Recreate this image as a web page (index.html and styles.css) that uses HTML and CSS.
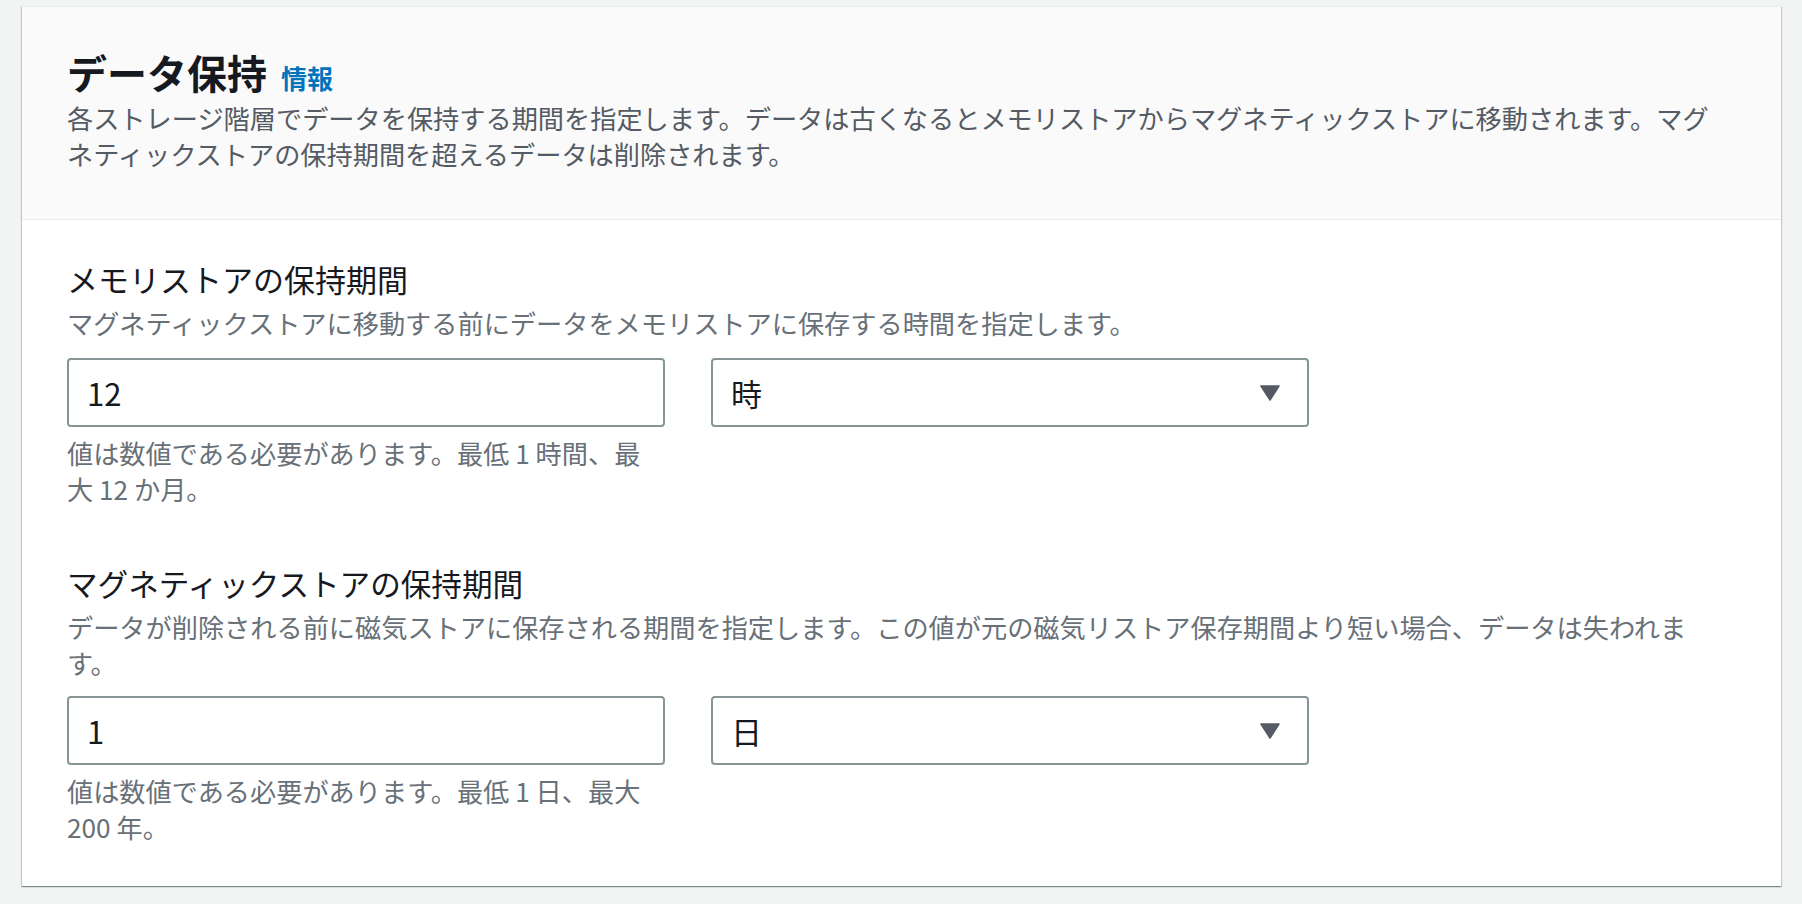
FILE: index.html
```html
<!DOCTYPE html>
<html lang="ja">
<head>
<meta charset="utf-8">
<link rel="stylesheet" href="styles.css">
</head>
<body>
<div class="page">
  <section class="card">
    <header class="card-header">
      <div class="title-row">
        <h2 class="title">データ保持</h2>
        <a class="info">情報</a>
      </div>
      <p class="header-desc">各ストレージ階層でデータを保持する期間を指定します。データは古くなるとメモリストアからマグネティックストアに移動されます。マグネティックストアの保持期間を超えるデータは削除されます。</p>
    </header>
    <div class="card-body">
      <div class="field">
        <div class="label">メモリストアの保持期間</div>
        <div class="desc">マグネティックストアに移動する前にデータをメモリストアに保存する時間を指定します。</div>
        <div class="controls">
          <div class="col">
            <div class="input">12</div>
            <div class="constraint">値は数値である必要があります。最低 1 時間、最大 12 か月。</div>
          </div>
          <div class="col">
            <div class="select"><span>時</span><svg class="caret" viewBox="0 0 20 16" width="20" height="16"><path d="M1 1 H19 L10 15 Z" fill="#545b64" stroke="#545b64" stroke-width="1.5" stroke-linejoin="round"/></svg></div>
          </div>
        </div>
      </div>
      <div class="field field-second">
        <div class="label label-second">マグネティックストアの保持期間</div>
        <div class="desc">データが削除される前に磁気ストアに保存される期間を指定します。この値が元の磁気リストア保存期間より短い場合、データは失われます。</div>
        <div class="controls controls-second">
          <div class="col">
            <div class="input">1</div>
            <div class="constraint">値は数値である必要があります。最低 1 日、最大 200 年。</div>
          </div>
          <div class="col">
            <div class="select"><span>日</span><svg class="caret" viewBox="0 0 20 16" width="20" height="16"><path d="M1 1 H19 L10 15 Z" fill="#545b64" stroke="#545b64" stroke-width="1.5" stroke-linejoin="round"/></svg></div>
          </div>
        </div>
      </div>
    </div>
  </section>
</div>
</body>
</html>
```
FILE: styles.css
```css
html, body {
  margin: 0;
  padding: 0;
  background: #f2f3f3;
}
body {
  font-family: "Noto Sans CJK JP", "Noto Sans", sans-serif;
  color: #16191f;
  text-spacing-trim: space-all;
}
.page {
  padding: 6px 21px 16px 22px;
}
.card {
  background: #ffffff;
  border-top: 1px solid #eaeded;
  box-shadow: 0 1px 1px 0 rgba(0, 28, 36, 0.3), 1px 1px 1px 0 rgba(0, 28, 36, 0.15), -1px 1px 1px 0 rgba(0, 28, 36, 0.15);
}
.card-header {
  background: #fafafa;
  border-bottom: 1px solid #eaeded;
  padding: 41px 54px 47px 45px;
}
.title-row {
  display: flex;
  align-items: baseline;
  gap: 14px;
}
.title {
  margin: 0;
  font-size: 40px;
  line-height: 48px;
  font-weight: 700;
  color: #16191f;
}
.info {
  font-size: 26px;
  font-weight: 700;
  color: #0073bb;
  text-decoration: none;
}
.header-desc {
  margin: 4px 0 0 0;
  font-size: 26.2px;
  line-height: 36px;
  color: #545b64;
}
.card-body {
  padding: 37px 54px 41px 45px;
}
.label {
  font-size: 31px;
  line-height: 44px;
  color: #16191f;
}
.label-second {
  font-size: 30.6px;
}
.desc {
  margin-top: 4px;
  font-size: 26.2px;
  line-height: 36px;
  color: #687078;
}
.controls {
  margin-top: 17px;
  display: grid;
  grid-template-columns: 598px 598px;
  column-gap: 46px;
  align-items: start;
}
.controls-second {
  margin-top: 15px;
}
.input, .select {
  box-sizing: border-box;
  height: 69px;
  border: 2px solid #879596;
  border-radius: 4px;
  background: #ffffff;
  font-size: 31px;
  color: #16191f;
  display: flex;
  align-items: center;
}
.input {
  padding-left: 18px;
}
.select {
  padding-left: 18px;
  padding-right: 27px;
  justify-content: space-between;
}
.caret {
  display: block;
}
.constraint {
  margin-top: 8px;
  font-size: 26.2px;
  line-height: 36px;
  color: #687078;
}
.field-second {
  margin-top: 54px;
}
```
